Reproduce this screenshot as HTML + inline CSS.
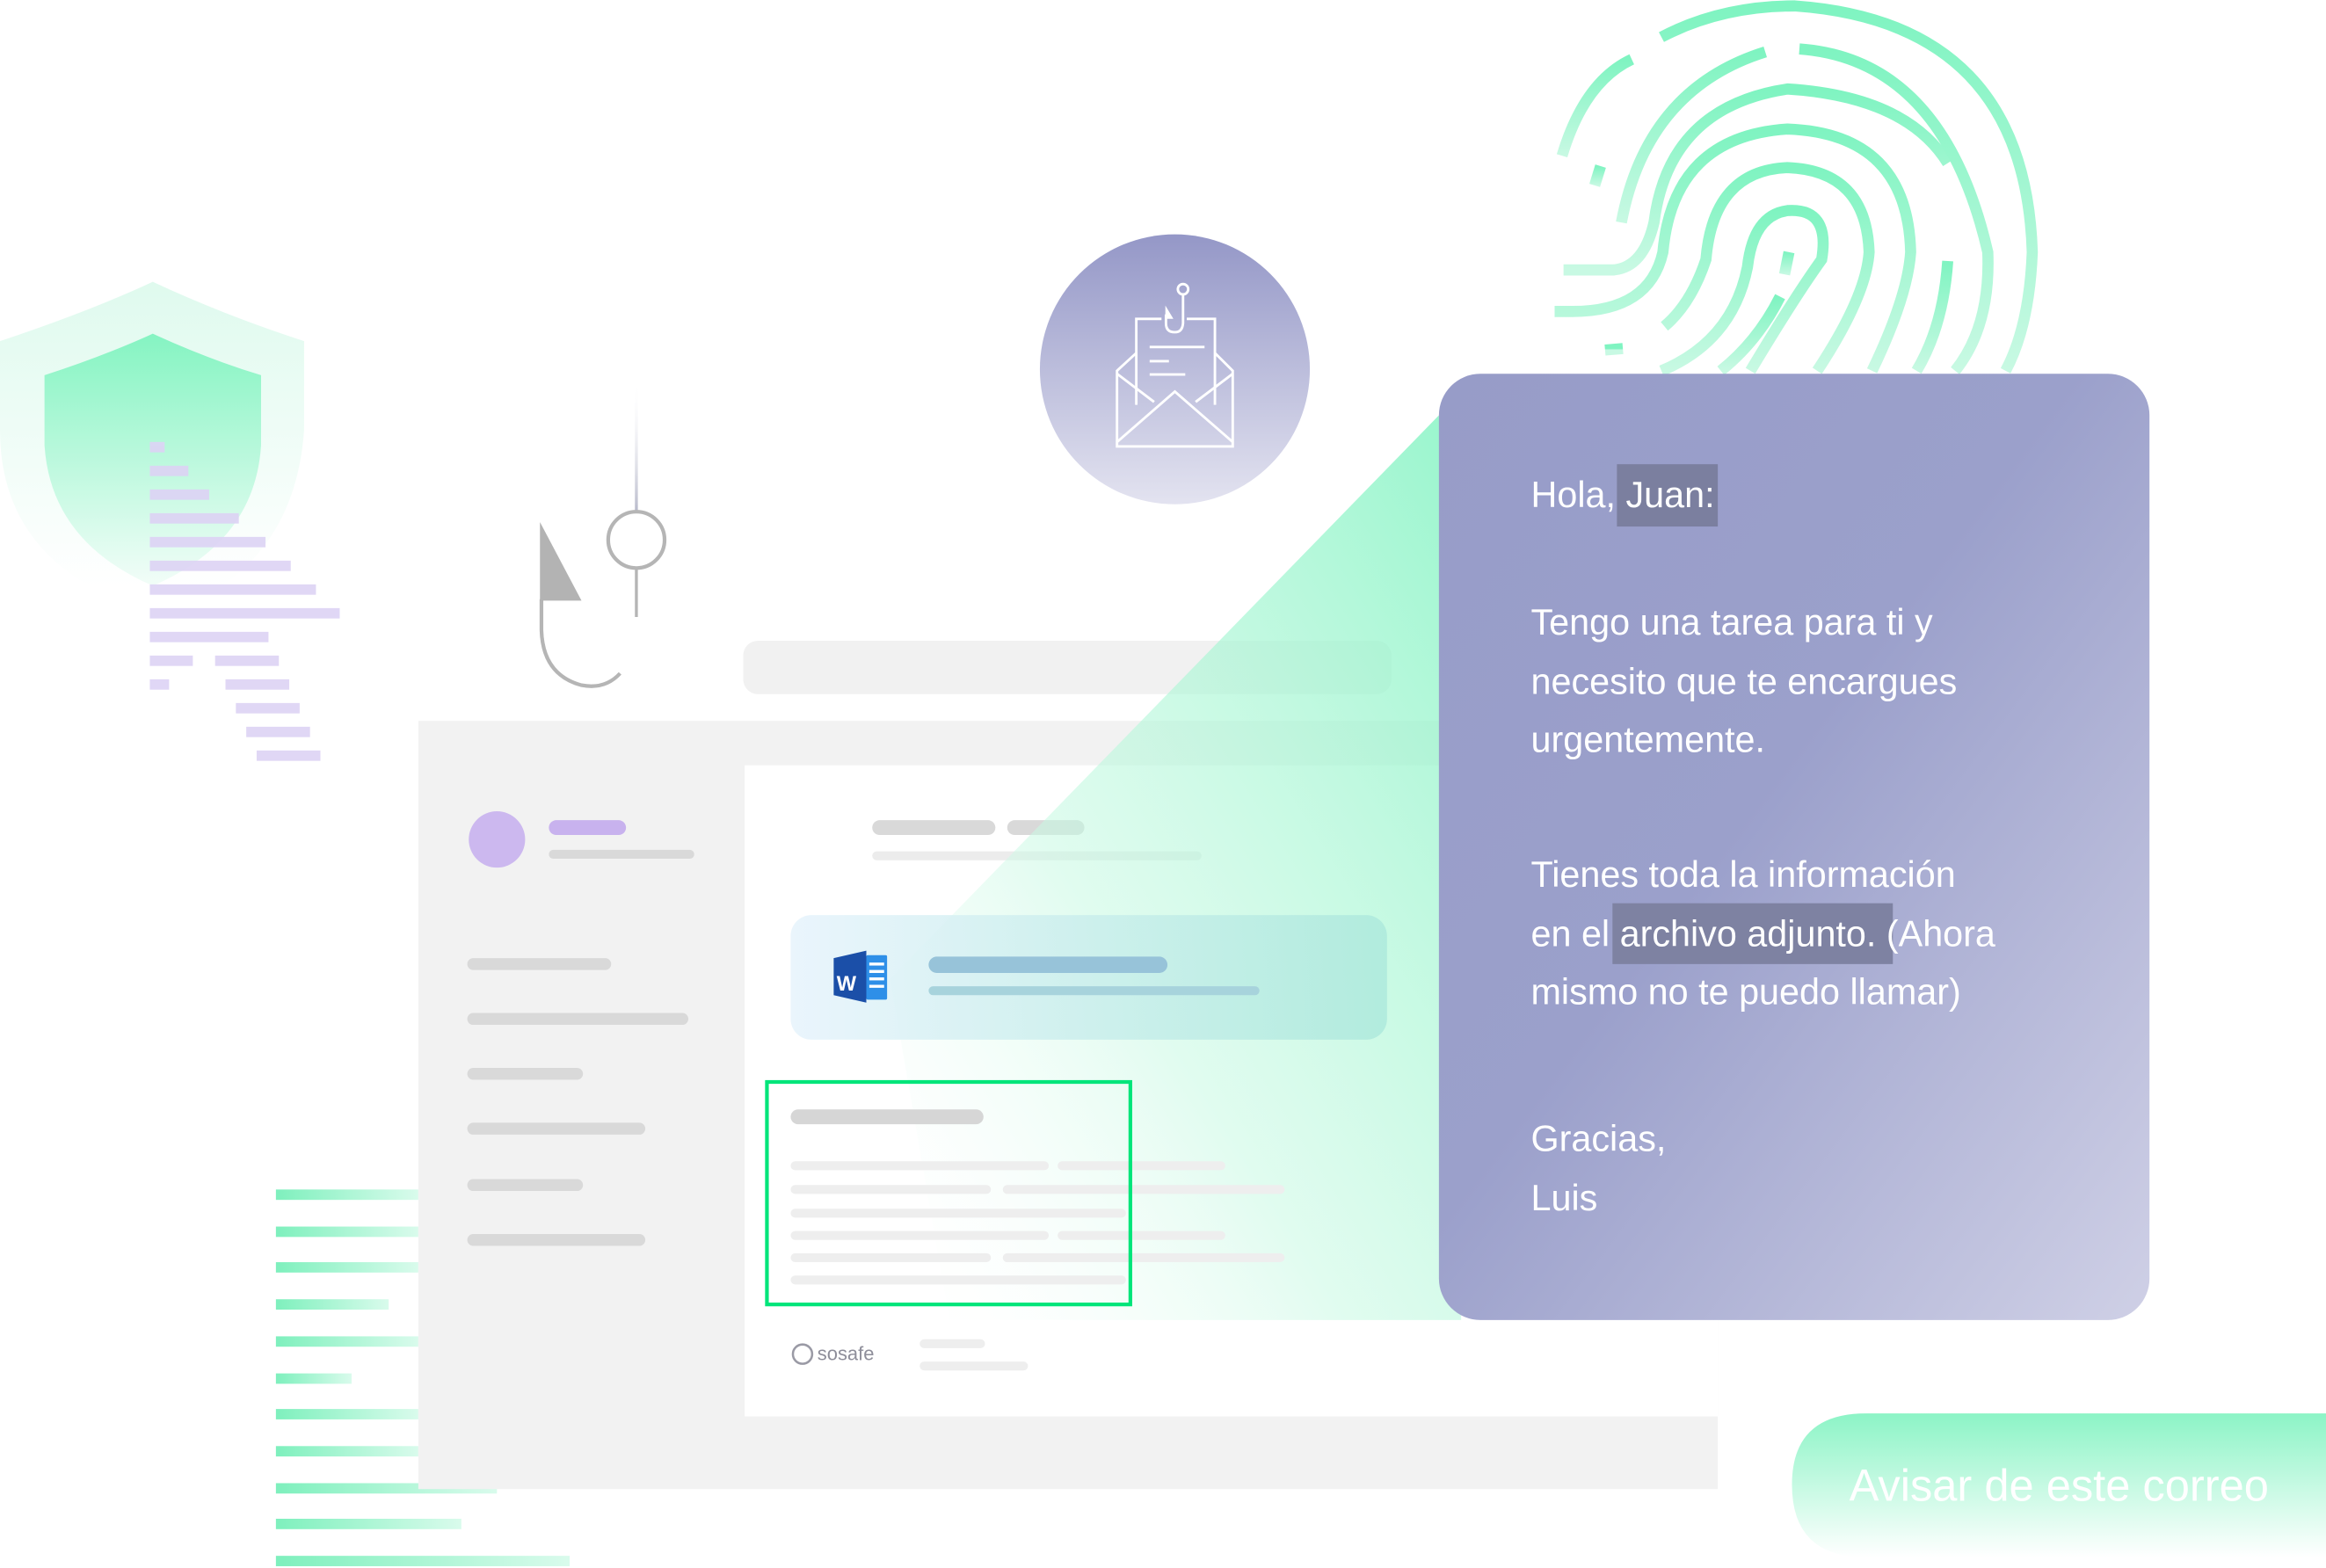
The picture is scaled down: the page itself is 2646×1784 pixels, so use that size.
<!DOCTYPE html>
<html><head><meta charset="utf-8"><style>
html,body{margin:0;padding:0;background:#fff;}
svg{display:block;}
</style></head><body>
<svg width="2646" height="1784" viewBox="0 0 1568 1057.2" preserveAspectRatio="none" xmlns="http://www.w3.org/2000/svg" font-family="Liberation Sans, sans-serif">
<defs>
<linearGradient id="shO" x1="0" y1="0" x2="0" y2="1"><stop offset="0" stop-color="#dffaee"/><stop offset="1" stop-color="#ffffff"/></linearGradient>
<linearGradient id="shI" x1="0" y1="0" x2="0" y2="1"><stop offset="0" stop-color="#85f4c2"/><stop offset="1" stop-color="#f2fdf8"/></linearGradient>
<linearGradient id="env" x1="0" y1="0" x2="0" y2="1"><stop offset="0" stop-color="#9497c7"/><stop offset="1" stop-color="#e3e3f0"/></linearGradient>
<linearGradient id="card" x1="0" y1="0" x2="1" y2="1"><stop offset="0" stop-color="#979cc8"/><stop offset="0.45" stop-color="#9ba0cb"/><stop offset="1" stop-color="#cfd0e6"/></linearGradient>
<linearGradient id="beam" x1="1" y1="0" x2="0" y2="1"><stop offset="0" stop-color="#7ef3c0"/><stop offset="0.6" stop-color="#c8f9e3" stop-opacity="0.7"/><stop offset="1" stop-color="#ffffff" stop-opacity="0"/></linearGradient>
<linearGradient id="att" x1="0" y1="0" x2="1" y2="0"><stop offset="0" stop-color="#e6f3fc"/><stop offset="1" stop-color="#ade9dc"/></linearGradient>
<linearGradient id="btn" x1="0" y1="0" x2="0" y2="1"><stop offset="0" stop-color="#8cf4c6"/><stop offset="1" stop-color="#ffffff"/></linearGradient>
<linearGradient id="gl" x1="0" y1="0" x2="1" y2="0"><stop offset="0" stop-color="#7ef0bd"/><stop offset="1" stop-color="#d9fbec"/></linearGradient>
<linearGradient id="fp" x1="0" y1="0" x2="0" y2="1"><stop offset="0" stop-color="#7ff4c1"/><stop offset="1" stop-color="#c8f9e3"/></linearGradient>
<linearGradient id="hl" gradientUnits="userSpaceOnUse" x1="0" y1="255" x2="0" y2="345"><stop offset="0" stop-color="#ffffff" stop-opacity="0"/><stop offset="1" stop-color="#b8bacb"/></linearGradient>
</defs>

<!-- shield -->
<path d="M0 230 Q60 210 103 190 Q150 212 205 230 L205 290 Q200 360 150 395 L60 395 Q0 360 0 290 Z" fill="url(#shO)"/>
<path d="M30 253 Q70 240 103 225 Q140 242 176 253 L176 300 Q172 365 103 395 Q34 365 30 300 Z" fill="url(#shI)"/>
<g fill="#ddd3f5" opacity="0.9">
<rect x="101" y="298" width="10" height="7"/><rect x="101" y="314" width="26" height="7"/><rect x="101" y="330" width="40" height="7"/><rect x="101" y="346" width="60" height="7"/><rect x="101" y="362" width="78" height="7"/><rect x="101" y="378" width="95" height="7"/><rect x="101" y="394" width="112" height="7"/><rect x="101" y="410" width="128" height="7"/><rect x="101" y="426" width="80" height="7"/><rect x="101" y="442" width="29" height="7"/><rect x="145" y="442" width="43" height="7"/><rect x="101" y="458" width="13" height="7"/><rect x="152" y="458" width="43" height="7"/><rect x="159" y="474" width="43" height="7"/><rect x="166" y="490" width="43" height="7"/><rect x="173" y="506" width="43" height="7"/>
</g>

<!-- hook -->
<rect x="428" y="255" width="2" height="90" fill="url(#hl)"/>
<circle cx="429" cy="364" r="19" fill="none" stroke="#b5b5b5" stroke-width="2.5"/>
<line x1="429" y1="383" x2="429" y2="416" stroke="#b5b5b5" stroke-width="2"/>
<path d="M365 404 L365 425 Q366 455 392 462 Q408 465 418 454" fill="none" stroke="#b5b5b5" stroke-width="2.5"/>
<path d="M364 352 L392 405 L364 405 Z" fill="#b3b3b3"/>

<!-- green lines bottom-left -->
<g fill="url(#gl)">
<rect x="186" y="802" width="96" height="7"/><rect x="186" y="827" width="96" height="7"/><rect x="186" y="851" width="96" height="7"/><rect x="186" y="876" width="76" height="7"/><rect x="186" y="901" width="96" height="7"/><rect x="186" y="926" width="51" height="7"/><rect x="186" y="950" width="96" height="7"/><rect x="186" y="975" width="96" height="7"/><rect x="186" y="1000" width="149" height="7"/><rect x="186" y="1024" width="125" height="7"/><rect x="186" y="1049" width="198" height="7"/>
</g>

<!-- search bar -->
<rect x="501" y="432" width="437" height="36" rx="10" fill="#f1f1f1"/>
<!-- window -->
<rect x="282" y="486" width="876" height="518" fill="#f2f2f2"/>
<rect x="502" y="516" width="656" height="439" fill="#ffffff"/>
<circle cx="335" cy="566" r="19" fill="#ccb8ef"/>
<rect x="370" y="553" width="52" height="10" rx="5" fill="#c8b2ee"/>
<rect x="370" y="573" width="98" height="6" rx="3" fill="#d9d9d9"/>
<g fill="#d9d9d9">
<rect x="315" y="646" width="97" height="8" rx="4"/><rect x="315" y="683" width="149" height="8" rx="4"/><rect x="315" y="720" width="78" height="8" rx="4"/><rect x="315" y="757" width="120" height="8" rx="4"/><rect x="315" y="795" width="78" height="8" rx="4"/><rect x="315" y="832" width="120" height="8" rx="4"/>
</g>
<rect x="588" y="553" width="83" height="10" rx="5" fill="#d9d9d9"/>
<rect x="679" y="553" width="52" height="10" rx="5" fill="#d9d9d9"/>
<rect x="588" y="574" width="222" height="6" rx="3" fill="#ececec"/>

<!-- beam -->
<path d="M970 280 L600 660 L640 890 L985 890 Z" fill="url(#beam)" opacity="0.8"/>

<!-- attachment -->
<rect x="533" y="617" width="402" height="84" rx="14" fill="url(#att)" opacity="0.85"/>
<path d="M562 646 L584 641 L584 676 L562 671 Z" fill="#1b4fa8"/>
<rect x="584" y="644" width="14" height="30" rx="1" fill="#2e8fe8"/>
<g fill="#fff"><rect x="586" y="649" width="10" height="2"/><rect x="586" y="654" width="10" height="2"/><rect x="586" y="659" width="10" height="2"/><rect x="586" y="664" width="10" height="2"/></g>
<text x="564" y="668" font-size="14" font-weight="bold" fill="#fff">W</text>
<rect x="626" y="645" width="161" height="11" rx="5.5" fill="#97c3d9"/>
<rect x="626" y="665" width="223" height="6" rx="3" fill="#a7d3dc"/>

<!-- phishing text block -->
<rect x="533" y="748" width="130" height="10" rx="5" fill="#d6d6d6"/>
<g fill="#eeeeee">
<rect x="533" y="783" width="174" height="6" rx="3"/><rect x="713" y="783" width="113" height="6" rx="3"/>
<rect x="533" y="799" width="135" height="6" rx="3"/><rect x="676" y="799" width="190" height="6" rx="3"/>
<rect x="533" y="815" width="226" height="6" rx="3"/>
<rect x="533" y="830" width="174" height="6" rx="3"/><rect x="713" y="830" width="113" height="6" rx="3"/>
<rect x="533" y="845" width="135" height="6" rx="3"/><rect x="676" y="845" width="190" height="6" rx="3"/>
<rect x="533" y="860" width="226" height="6" rx="3"/>
</g>
<rect x="517" y="729.5" width="245" height="150" fill="none" stroke="#00e57a" stroke-width="2.5"/>
<circle cx="541" cy="913" r="6.5" fill="none" stroke="#9a9aa5" stroke-width="1.5"/>
<text x="551" y="917" font-size="13" fill="#8e8e9a">sosafe</text>
<rect x="620" y="903" width="44" height="6" rx="3" fill="#eeeeee"/>
<rect x="620" y="918" width="73" height="6" rx="3" fill="#eeeeee"/>

<!-- envelope circle -->
<circle cx="792" cy="249" r="91" fill="url(#env)"/>
<g fill="none" stroke="#fff" stroke-width="1.7">
<path d="M783 215 L766 215 L766 273"/><path d="M800 215 L819 215 L819 273"/>
<path d="M766 238 L753 250 L753 301 L831 301 L831 250 L819 238"/>
<path d="M753 252 L778 271"/><path d="M831 252 L806 271"/>
<path d="M753 298 L792 264 L831 298"/>
<path d="M775 234 L812 234 M775 243.5 L788 243.5 M775 252.5 L799 252.5"/>
<circle cx="797.5" cy="195" r="3.5"/>
<path d="M797.5 198.5 L797.5 218 Q797 224 792 224 Q786 224 786 218 L786 212"/>
</g>
<path d="M785.6 206 L791 215 L785.6 215 Z" fill="#fff"/>

<!-- fingerprint -->
<g fill="none" stroke="url(#fp)" stroke-width="7.5">
<path d="M1180 250 Q1210 200 1228 175 Q1234 140 1205 142 Q1182 145 1178 180 Q1168 230 1120 250"/>
<path d="M1206 170 L1203 185"/>
<path d="M1200 200 Q1185 230 1160 250"/>
<path d="M1225 250 Q1258 200 1260 170 Q1258 115 1205 113 Q1155 115 1150 175 Q1140 205 1122 220"/>
<path d="M1262 250 Q1286 200 1288 170 Q1286 90 1205 87 Q1128 92 1121 170 Q1112 210 1060 210 L1048 210"/>
<path d="M1054 182 L1088 182 Q1108 180 1115 150 Q1125 72 1205 60 Q1285 65 1313 110"/>
<path d="M1093 150 Q1110 60 1190 35"/><path d="M1213 33 Q1310 40 1340 170 Q1342 220 1318 250"/>
<path d="M1313 176 Q1310 220 1292 250"/>
<path d="M1075 125 L1079 112"/><path d="M1053 105 Q1068 55 1100 40"/><path d="M1120 25 Q1160 4 1210 4 Q1365 15 1370 170 Q1368 220 1352 250"/>
<path d="M1056 236 L1062 236"/><path d="M1082 236 L1094 235"/>
</g>

<!-- card -->
<rect x="970" y="252" width="479" height="638" rx="28" fill="url(#card)"/>
<rect x="1090" y="313" width="68" height="42" fill="#7b7f9f"/>
<rect x="1087" y="609" width="189" height="41" fill="#7e82a2"/>
<g fill="#ffffff" font-size="24.5">
<text x="1032" y="342">Hola, Juan:</text>
<text x="1032" y="428">Tengo una tarea para ti y</text>
<text x="1032" y="468">necesito que te encargues</text>
<text x="1032" y="507">urgentemente.</text>
<text x="1032" y="598">Tienes toda la información</text>
<text x="1032" y="638">en el archivo adjunto. (Ahora</text>
<text x="1032" y="677">mismo no te puedo llamar)</text>
<text x="1032" y="776">Gracias,</text>
<text x="1032" y="816">Luis</text>
</g>

<!-- button -->
<path d="M1258 953 L1568 953 L1568 1050 L1258 1050 Q1208 1050 1208 1001 Q1208 953 1258 953 Z" fill="url(#btn)"/>
<text x="1388" y="1012" font-size="30" fill="#ffffff" text-anchor="middle">Avisar de este correo</text>
</svg>
</body></html>
